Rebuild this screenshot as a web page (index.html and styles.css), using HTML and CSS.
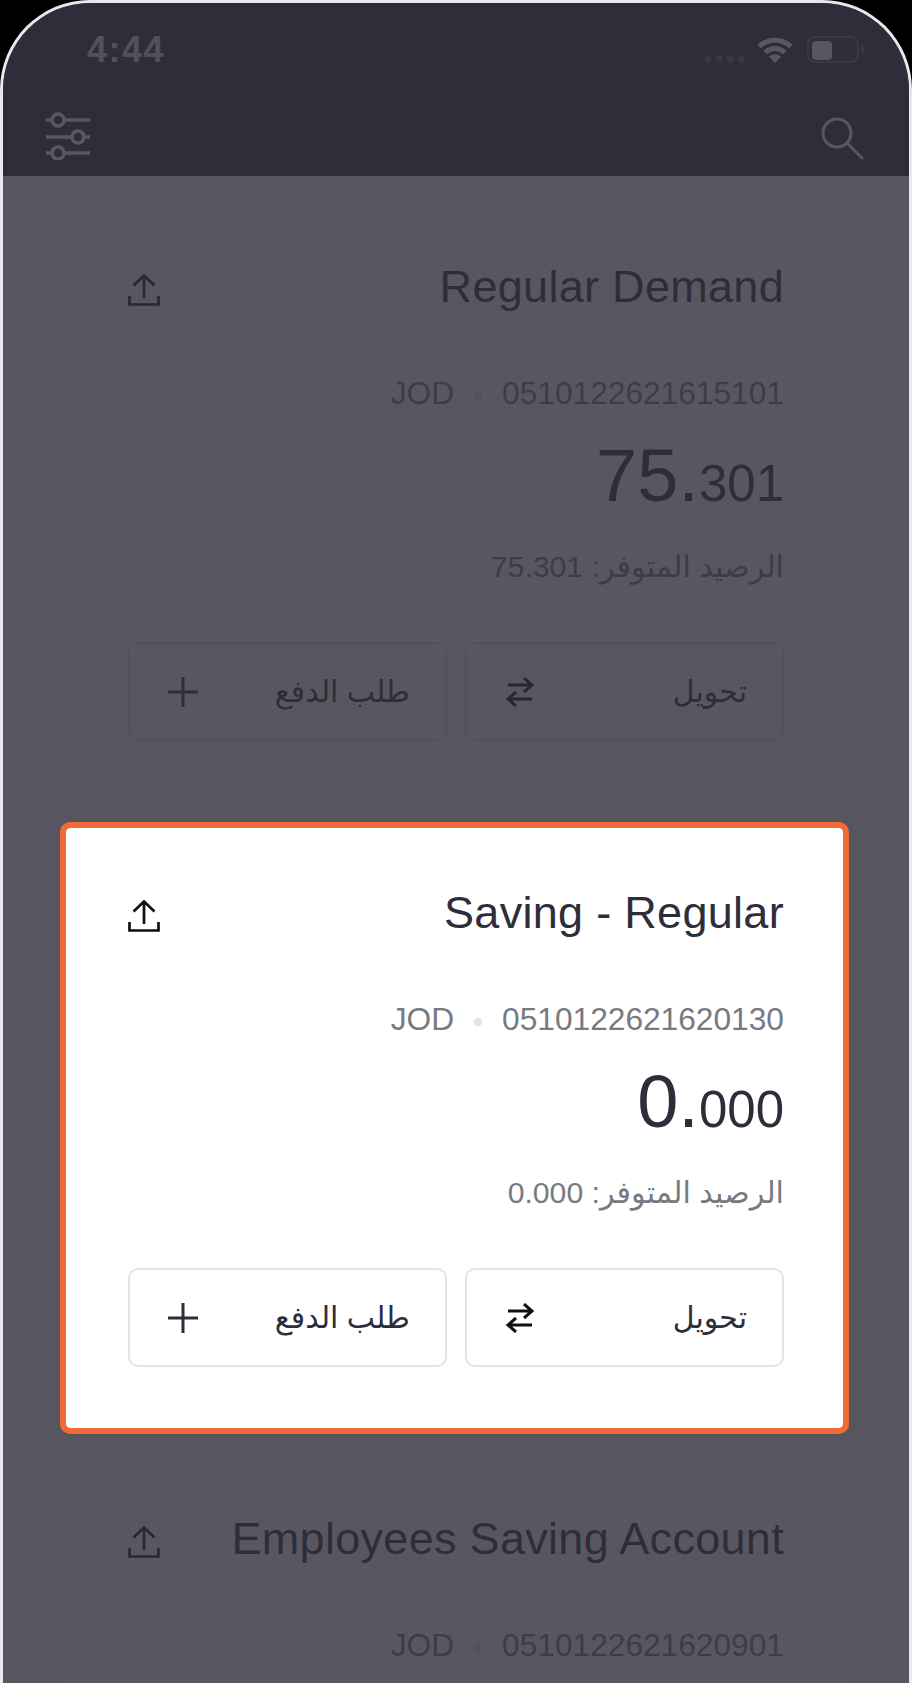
FILE: index.html
```html
<!DOCTYPE html>
<html lang="ar" dir="rtl">
<head>
<meta charset="utf-8">
<title>Accounts</title>
<link rel="stylesheet" href="styles.css">
</head>
<body>
<div class="screen">
  <header class="topbar" dir="ltr">
    <div class="status">
      <span class="time">4:44</span>
      <div class="status-icons">
        <div class="signal"><i></i><i></i><i></i><i></i></div>
        <svg class="wifi" viewBox="0 0 36 26"><path d="M2 9.5C11 1 25 1 34 9.5" /><path d="M8 15.500C14 10 22 10 28 15.500" /><path class="wifi-tip" d="M18 26l-6-6.500c3.500-2.600 8.500-2.600 12 0z"/></svg>
        <div class="battery"><div class="battery-level"></div></div>
        <div class="battery-nub"></div>
      </div>
    </div>
    <nav class="nav">
      <svg class="icon-filter" viewBox="0 0 44 48"><path d="M0 8h6M18 8h26M0 25h26M38 25h6M0 41h6M18 41h26"/><circle cx="12" cy="8" r="6"/><circle cx="32" cy="25" r="6"/><circle cx="12" cy="41" r="6"/></svg>
      <svg class="icon-search" viewBox="0 0 44 44"><circle cx="16" cy="16" r="14"/><path d="M26 26l16 16"/></svg>
    </nav>
  </header>

  <main class="list">
    <section class="card">
      <div class="title-row">
        <h2 class="title">Regular Demand</h2>
        <svg class="icon-share" viewBox="0 0 32 32"><path d="M16 24V2.500M5.500 11.500L16 1.500l10.500 10M1.500 22v8.500h29V22"/></svg>
      </div>
      <div class="account"><span>0510122621615101</span><i class="dot"></i><span>JOD</span></div>
      <div class="amount"><span dir="ltr">75.<small>301</small></span></div>
      <div class="available">الرصيد المتوفر: 75.301</div>
      <div class="actions">
        <button class="action">تحويل<svg class="icon-swap" viewBox="0 0 30 30"><path d="M3 8h24M19 1l8 7-8 7M27 22H3M11 15l-8 7 8 7"/></svg></button>
        <button class="action">طلب الدفع<svg class="icon-plus" viewBox="0 0 30 30"><path d="M15 0v30M0 15h30"/></svg></button>
      </div>
    </section>

    <section class="card card-active">
      <div class="title-row">
        <h2 class="title">Saving - Regular</h2>
        <svg class="icon-share" viewBox="0 0 32 32"><path d="M16 24V2.500M5.500 11.500L16 1.500l10.500 10M1.500 22v8.500h29V22"/></svg>
      </div>
      <div class="account"><span>0510122621620130</span><i class="dot"></i><span>JOD</span></div>
      <div class="amount"><span dir="ltr">0.<small>000</small></span></div>
      <div class="available">الرصيد المتوفر: 0.000</div>
      <div class="actions">
        <button class="action">تحويل<svg class="icon-swap" viewBox="0 0 30 30"><path d="M3 8h24M19 1l8 7-8 7M27 22H3M11 15l-8 7 8 7"/></svg></button>
        <button class="action">طلب الدفع<svg class="icon-plus" viewBox="0 0 30 30"><path d="M15 0v30M0 15h30"/></svg></button>
      </div>
    </section>

    <section class="card">
      <div class="title-row">
        <h2 class="title">Employees Saving Account</h2>
        <svg class="icon-share" viewBox="0 0 32 32"><path d="M16 24V2.500M5.500 11.500L16 1.500l10.500 10M1.500 22v8.500h29V22"/></svg>
      </div>
      <div class="account"><span>0510122621620901</span><i class="dot"></i><span>JOD</span></div>
    </section>
  </main>

  <div class="scrim"></div>
</div>
</body>
</html>
```
FILE: styles.css
```css
* { box-sizing: border-box; }
html, body { margin: 0; padding: 0; background: #000; }
body { width: 912px; height: 1683px; overflow: hidden; font-family: "Liberation Sans", "DejaVu Sans", sans-serif; color: #2e2d3a; }

.screen {
  position: relative;
  height: 1683px;
  overflow: hidden;
  background: #f8f8fa;
  border: 3px solid #e9e9ed;
  border-bottom: 0;
  border-radius: 90px 90px 0 0;
}
.scrim { position: absolute; inset: 0; z-index: 1; background: rgba(46, 45, 58, 0.8); }

.topbar { height: 173px; background: #2e2d3a; color: #fff; }
.status { height: 79px; padding: 25px 45px 0 84px; display: flex; justify-content: space-between; align-items: flex-start; }
.time { font-size: 36px; line-height: 44px; font-weight: 700; letter-spacing: 1.5px; color: rgba(255, 255, 255, 0.85); }
.status-icons { display: flex; align-items: flex-start; margin-top: 8px; }
.signal { display: flex; gap: 5px; margin: 19px 13px 0 0; }
.signal i { width: 6px; height: 8px; border-radius: 3px; background: rgba(255, 255, 255, 0.28); }
.wifi { width: 36px; height: 26px; margin: 1px 14px 0 0; fill: none; stroke: #fff; stroke-width: 5; }
.wifi-tip { fill: #fff; stroke: none; }
.battery { width: 52px; height: 27px; padding: 3px; border: 2px solid rgba(255, 255, 255, 0.28); border-radius: 8px; }
.battery-level { width: 20px; height: 19px; background: #fff; border-radius: 4px; }
.battery-nub { width: 3px; height: 8px; margin: 10px 0 0 2px; background: rgba(255, 255, 255, 0.28); border-radius: 0 2px 2px 0; }

.nav { display: flex; justify-content: space-between; align-items: flex-start; padding: 30px 44px 0 43px; }
.icon-filter { width: 44px; height: 48px; fill: none; stroke: #fff; stroke-width: 3.5; stroke-linecap: round; }
.icon-search { width: 44px; height: 44px; margin-top: 5px; fill: none; stroke: #fff; stroke-width: 3; }

.list { padding: 20px 60px 0 57px; display: flex; flex-direction: column; gap: 14px; }
.card {
  height: 612px;
  flex: none;
  padding: 54px 59px 60px 62px;
  background: #fff padding-box;
  border: 6px solid transparent;
  border-radius: 10px;
}
.card-active { position: relative; z-index: 2; border-color: #f26b34; }

.title-row { display: flex; justify-content: space-between; align-items: center; height: 60px; }
.title { margin: 1px 0 0; font-size: 45px; line-height: 60px; font-weight: 400; letter-spacing: 0.3px; color: #2e2d3a; white-space: nowrap; }
.icon-share { width: 32px; height: 32px; margin-top: 8px; fill: none; stroke: #0f0f14; stroke-width: 2.7; }

.account { display: flex; align-items: center; gap: 20px; margin-top: 57px; font-size: 31.700px; line-height: 40px; color: #777a82; }
.dot { width: 8px; height: 8px; margin-top: 6px; border-radius: 50%; background: #e3e3e6; }

.amount { height: 90px; margin-top: 18px; font-size: 74px; line-height: 90px; }
.amount small { font-size: 51px; line-height: 0; }

.available { margin-top: 26px; font-size: 30.200px; line-height: 40px; color: #777a82; }

.actions { display: flex; gap: 18px; margin-top: 55px; }
.action {
  flex: 1;
  height: 99px;
  padding: 0 35px 0 38px;
  display: flex;
  justify-content: space-between;
  align-items: center;
  background: #fff;
  border: 2px solid #e4e4e6;
  border-radius: 10px;
  font: 400 30px/40px "Liberation Sans", "DejaVu Sans", sans-serif;
  color: #2e2d3a;
}
.icon-swap { width: 30px; height: 30px; fill: none; stroke: #0f0f14; stroke-width: 3; }
.icon-plus { width: 30px; height: 30px; fill: none; stroke: #2e2d3a; stroke-width: 3; }
```
